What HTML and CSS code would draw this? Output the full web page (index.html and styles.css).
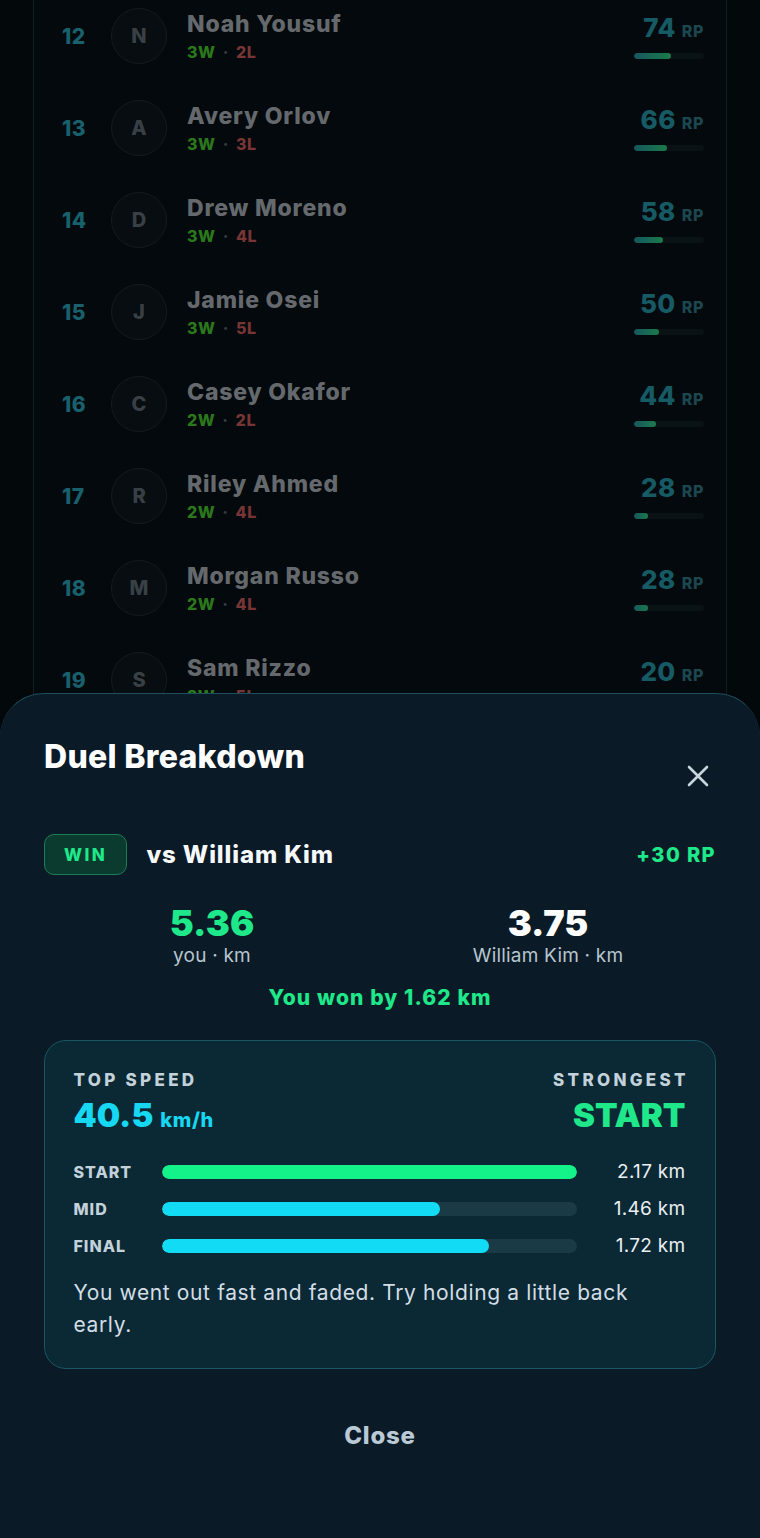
FILE: index.html
```html
<!DOCTYPE html>
<html lang="en">
<head>
<meta charset="utf-8">
<title>Duel Breakdown</title>
<link rel="stylesheet" href="styles.css">
</head>
<body>
<div class="screen">
  <div class="board">
    <div class="row"><span class="rank">12</span><span class="avatar">N</span><div class="who"><div class="name">Noah Yousuf</div><div class="wl"><span class="w">3W</span><span class="dot">·</span><span class="l">2L</span></div></div><div class="rp"><div class="rp-val">74<span class="rp-unit">RP</span></div><div class="rp-bar"><span class="rp-fill" style="width:53%"></span></div></div></div>
    <div class="row"><span class="rank">13</span><span class="avatar">A</span><div class="who"><div class="name">Avery Orlov</div><div class="wl"><span class="w">3W</span><span class="dot">·</span><span class="l">3L</span></div></div><div class="rp"><div class="rp-val">66<span class="rp-unit">RP</span></div><div class="rp-bar"><span class="rp-fill" style="width:47%"></span></div></div></div>
    <div class="row"><span class="rank">14</span><span class="avatar">D</span><div class="who"><div class="name">Drew Moreno</div><div class="wl"><span class="w">3W</span><span class="dot">·</span><span class="l">4L</span></div></div><div class="rp"><div class="rp-val">58<span class="rp-unit">RP</span></div><div class="rp-bar"><span class="rp-fill" style="width:41%"></span></div></div></div>
    <div class="row"><span class="rank">15</span><span class="avatar">J</span><div class="who"><div class="name">Jamie Osei</div><div class="wl"><span class="w">3W</span><span class="dot">·</span><span class="l">5L</span></div></div><div class="rp"><div class="rp-val">50<span class="rp-unit">RP</span></div><div class="rp-bar"><span class="rp-fill" style="width:36%"></span></div></div></div>
    <div class="row"><span class="rank">16</span><span class="avatar">C</span><div class="who"><div class="name">Casey Okafor</div><div class="wl"><span class="w">2W</span><span class="dot">·</span><span class="l">2L</span></div></div><div class="rp"><div class="rp-val">44<span class="rp-unit">RP</span></div><div class="rp-bar"><span class="rp-fill" style="width:31%"></span></div></div></div>
    <div class="row"><span class="rank">17</span><span class="avatar">R</span><div class="who"><div class="name">Riley Ahmed</div><div class="wl"><span class="w">2W</span><span class="dot">·</span><span class="l">4L</span></div></div><div class="rp"><div class="rp-val">28<span class="rp-unit">RP</span></div><div class="rp-bar"><span class="rp-fill" style="width:20%"></span></div></div></div>
    <div class="row"><span class="rank">18</span><span class="avatar">M</span><div class="who"><div class="name">Morgan Russo</div><div class="wl"><span class="w">2W</span><span class="dot">·</span><span class="l">4L</span></div></div><div class="rp"><div class="rp-val">28<span class="rp-unit">RP</span></div><div class="rp-bar"><span class="rp-fill" style="width:20%"></span></div></div></div>
    <div class="row"><span class="rank">19</span><span class="avatar">S</span><div class="who"><div class="name">Sam Rizzo</div><div class="wl"><span class="w">2W</span><span class="dot">·</span><span class="l">5L</span></div></div><div class="rp"><div class="rp-val">20<span class="rp-unit">RP</span></div><div class="rp-bar"><span class="rp-fill" style="width:14%"></span></div></div></div>
    <div class="row row-empty"></div>
  </div>

  <div class="sheet">
    <div class="sheet-head">
      <h2 class="sheet-title">Duel Breakdown</h2>
      <button class="x-btn" aria-label="Close">
        <svg width="22" height="22" viewBox="0 0 22 22"><path d="M2 2 L20 20 M20 2 L2 20" stroke="#c9d5dd" stroke-width="2.6" stroke-linecap="round" fill="none"/></svg>
      </button>
    </div>

    <div class="duel-row">
      <span class="badge">WIN</span>
      <span class="vs">vs William Kim</span>
      <span class="gain">+30 RP</span>
    </div>

    <div class="scores">
      <div class="score">
        <div class="score-num score-you">5.36</div>
        <div class="score-cap">you · km</div>
      </div>
      <div class="score">
        <div class="score-num">3.75</div>
        <div class="score-cap">William Kim · km</div>
      </div>
    </div>
    <div class="margin">You won by 1.62 km</div>

    <div class="card">
      <div class="card-top">
        <div class="stat">
          <div class="stat-label">TOP SPEED</div>
          <div class="stat-val speed">40.5<span class="stat-unit">km/h</span></div>
        </div>
        <div class="stat stat-right">
          <div class="stat-label">STRONGEST</div>
          <div class="stat-val strong">START</div>
        </div>
      </div>
      <div class="splits">
        <span class="split-name">START</span>
        <span class="track"><span class="fill fill-green" style="width:100%"></span></span>
        <span class="split-val">2.17 km</span>
        <span class="split-name">MID</span>
        <span class="track"><span class="fill fill-cyan" style="width:67%"></span></span>
        <span class="split-val">1.46 km</span>
        <span class="split-name">FINAL</span>
        <span class="track"><span class="fill fill-cyan" style="width:79%"></span></span>
        <span class="split-val">1.72 km</span>
      </div>
      <p class="note">You went out fast and faded. Try holding a little back early.</p>
    </div>

    <button class="close-btn">Close</button>
  </div>
</div>
</body>
</html>
```

FILE: styles.css
```css
* { box-sizing: border-box; }
html, body { margin: 0; padding: 0; }
body {
  background: #03080b;
  font-family: Inter, "Noto Sans", "Liberation Sans", sans-serif;
  color: #f4f8fa;
}
.screen {
  position: relative;
  width: 760px;
  height: 1538px;
  overflow: hidden;
  background: #03080b;
}

/* leaderboard behind the sheet */
.board {
  margin: -10px 33px 0;
  border-left: 1px solid #0b1f24;
  border-right: 1px solid #0b1f24;
  background: #03090c;
}
.row {
  height: 92px;
  display: flex;
  align-items: center;
  padding: 0 22px 0 28px;
}
.rank {
  width: 49px;
  font-size: 21px;
  font-weight: 800;
  letter-spacing: 0.6px;
  color: #18606c;
}
.avatar {
  width: 56px;
  height: 56px;
  border-radius: 50%;
  border: 1px solid #141c20;
  background: #070d10;
  display: flex;
  align-items: center;
  justify-content: center;
  font-size: 20px;
  font-weight: 800;
  color: #394045;
  flex: none;
}
.who { margin-left: 20px; flex: 1; }
.name {
  font-size: 23px;
  line-height: 28px;
  font-weight: 800;
  letter-spacing: 0.8px;
  color: #65696d;
}
.wl {
  margin-top: 3px;
  font-size: 16px;
  line-height: 22px;
  font-weight: 800;
  letter-spacing: 0.6px;
}
.w { color: #2b781c; }
.l { color: #773535; }
.dot { color: #353b40; margin: 0 7px; }
.rp { width: 70px; display: flex; flex-direction: column; align-items: flex-end; }
.rp-val {
  font-size: 26px;
  line-height: 30px;
  font-weight: 800;
  letter-spacing: 0.4px;
  color: #165a64;
  white-space: nowrap;
}
.rp-unit {
  font-size: 16px;
  font-weight: 800;
  letter-spacing: 0.6px;
  color: #1b4750;
  margin-left: 6px;
}
.rp-bar {
  margin-top: 7px;
  width: 70px;
  height: 6px;
  border-radius: 3px;
  background: #0b1215;
  overflow: hidden;
}
.rp-fill {
  display: block;
  height: 100%;
  border-radius: 3px;
  background: linear-gradient(90deg, #16575f, #1b7a4a);
}

/* bottom sheet */
.sheet {
  position: absolute;
  left: 0;
  right: 0;
  bottom: 0;
  height: 845px;
  background: #0a1a26;
  border-top: 1px solid #1f4e5e;
  border-radius: 44px 44px 0 0;
  padding: 43px 44px 0;
}
.sheet-head {
  display: flex;
  justify-content: space-between;
  align-items: flex-start;
}
.sheet-title {
  margin: 0;
  font-size: 32px;
  line-height: 40px;
  font-weight: 800;
  letter-spacing: 0.3px;
  color: #ffffff;
}
.x-btn {
  width: 22px;
  height: 22px;
  padding: 0;
  margin: 28px 7px 0 0;
  border: 0;
  background: none;
  display: block;
}
.x-btn svg { display: block; }

.duel-row {
  margin-top: 47px;
  display: flex;
  align-items: center;
}
.badge {
  height: 41px;
  padding: 0 19px 0 19px;
  display: flex;
  align-items: center;
  border: 1.5px solid #1b7d57;
  background: #0b3a2e;
  border-radius: 10px;
  font-size: 17px;
  font-weight: 800;
  letter-spacing: 2.5px;
  color: #1ee88a;
}
.vs {
  margin-left: 19px;
  font-size: 24px;
  font-weight: 800;
  letter-spacing: 0.9px;
  color: #f6f9fb;
}
.gain {
  margin-left: auto;
  font-size: 20px;
  font-weight: 800;
  letter-spacing: 1.4px;
  color: #1ee88a;
}

.scores {
  margin-top: 27px;
  display: grid;
  grid-template-columns: 1fr 1fr;
}
.score { text-align: center; }
.score-num {
  font-size: 36px;
  line-height: 42px;
  font-weight: 900;
  color: #ffffff;
}
.score-you { color: #1ee88a; }
.score-cap {
  font-size: 19px;
  line-height: 24px;
  letter-spacing: 0.2px;
  color: #b7c5cf;
}
.margin {
  margin-top: 17px;
  text-align: center;
  font-size: 21px;
  line-height: 26px;
  font-weight: 800;
  letter-spacing: 1.1px;
  color: #1ee88a;
}

.card {
  margin-top: 29px;
  border: 1.5px solid #1a5765;
  background: #0a2935;
  border-radius: 22px;
  padding: 28.5px 29.5px 27px 28.5px;
}
.card-top {
  display: flex;
  justify-content: space-between;
}
.stat-right { text-align: right; }
.stat-label {
  font-size: 17px;
  line-height: 20px;
  font-weight: 800;
  letter-spacing: 3.3px;
  color: #c3d1db;
}
.stat-right .stat-label { margin-right: -3.3px; }
.stat-val {
  margin-top: 5px;
  font-size: 33px;
  line-height: 40px;
  font-weight: 900;
}
.speed { color: #17d8f2; }
.strong { color: #1ee88a; }
.stat-unit {
  font-size: 20px;
  font-weight: 800;
  letter-spacing: 0.6px;
  margin-left: 7px;
}

.splits {
  margin-top: 21px;
  display: grid;
  grid-template-columns: 88px 1fr 109px;
  row-gap: 15px;
  align-items: center;
}
.split-name {
  font-size: 16px;
  line-height: 22px;
  font-weight: 800;
  letter-spacing: 1px;
  color: #c3d1db;
}
.track {
  display: block;
  height: 14px;
  border-radius: 7px;
  background: #1a3a46;
  overflow: hidden;
}
.fill {
  display: block;
  height: 100%;
  border-radius: 7px;
}
.fill-green { background: #14f28a; }
.fill-cyan { background: #12dcf5; }
.split-val {
  text-align: right;
  font-size: 19px;
  line-height: 22px;
  letter-spacing: 0.3px;
  color: #e9eff3;
}
.note {
  margin: 20px 0 0;
  font-size: 21px;
  line-height: 32px;
  letter-spacing: 0.62px;
  color: #d3dde5;
}

.close-btn {
  display: block;
  margin: 39px auto 0;
  height: 56px;
  padding: 0 24px;
  border: 0;
  background: none;
  font-family: Inter, "Noto Sans", "Liberation Sans", sans-serif;
  font-size: 24px;
  font-weight: 800;
  letter-spacing: 0.8px;
  color: #b9c9d5;
}
```
